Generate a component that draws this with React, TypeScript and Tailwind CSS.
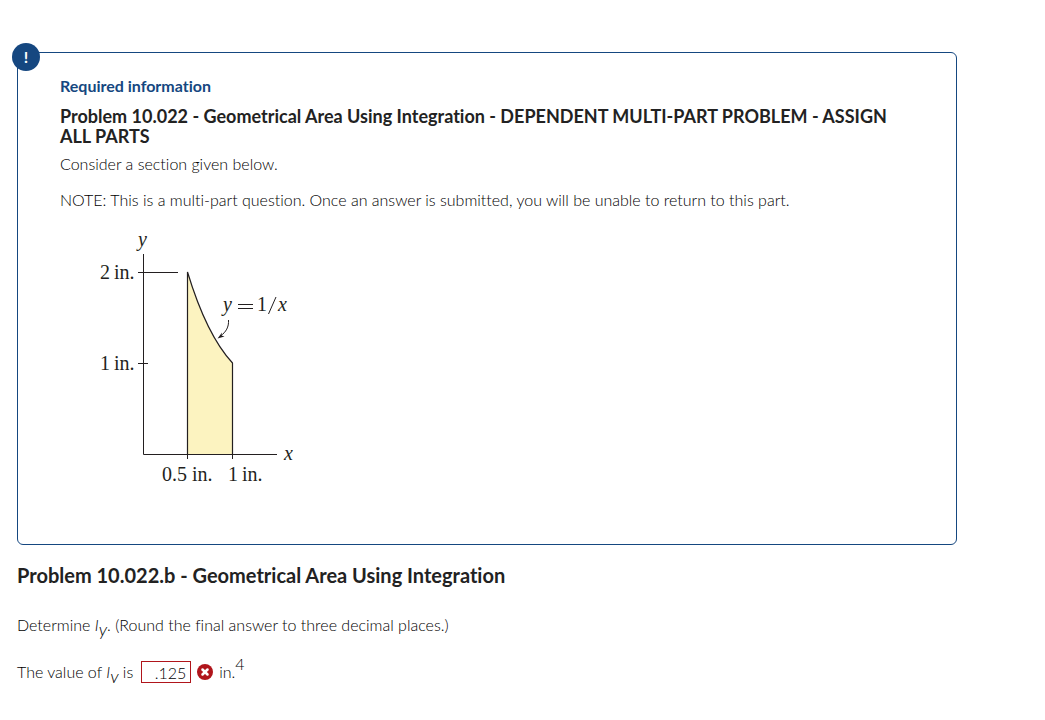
import { X } from "lucide-react";

function SectionFigure() {
  return (
    <svg
      width="220"
      height="264"
      viewBox="80 228 220 264"
      role="img"
      aria-label="Area under y = 1/x between 0.5 in. and 1 in."
      className="font-['Liberation_Serif',serif] text-[20px]"
      fill="#231f20"
    >
      {/* Shaded area */}
      <path
        d="M187.500 272C199 310 214 343 232.500 363V454.500H187.500Z"
        fill="#fcf3c0"
        stroke="#231f20"
        strokeWidth="1.2"
      />

      {/* Axes and ticks */}
      <g stroke="#231f20" strokeWidth="1" fill="none">
        <path d="M143.500 254V454.500H277" />
        <path d="M138 272.500H178" />
        <path d="M138 363.500H148" />
        <path d="M187.500 449V459" />
        <path d="M232.500 449V459" />
        <path d="M228.500 320C229 327 226 332 220.500 336" />
      </g>
      <path d="M217.500 338.500L222 332.500L221.500 335.500L224.500 336.500Z" />

      <text x="138" y="246" fontStyle="italic">y</text>
      <text x="100" y="279">2</text>
      <text x="114" y="279">in.</text>
      <text x="100" y="370">1</text>
      <text x="114" y="370">in.</text>
      <text x="223" y="311" fontStyle="italic">y</text>
      <path d="M238 304.500H253M238 308.500H253" stroke="#231f20" />
      <text x="257" y="311">1</text>
      <path d="M268.500 314L276 297" stroke="#231f20" />
      <text x="278" y="311" fontStyle="italic">x</text>
      <text x="284" y="460" fontStyle="italic">x</text>
      <text x="162" y="481">0.5</text>
      <text x="192" y="481">in.</text>
      <text x="228" y="481">1</text>
      <text x="242" y="481">in.</text>
    </svg>
  );
}

function MomentSymbol() {
  return (
    <i>
      I<sub className="text-lg leading-none">y</sub>
    </i>
  );
}

export default function App() {
  return (
    <main className="pt-[52px] pl-[17px] pr-[88px] font-['Lato',sans-serif] text-base leading-5 font-light text-black [font-variant-ligatures:none]">
      {/* Required information */}
      <section className="relative rounded-md border border-[#154780] px-[42px] pt-[23px] pb-[52px]">
        <span className="absolute -left-1.5 -top-2.5 flex size-7 items-center justify-center rounded-full bg-[#154780] text-base font-bold text-white">
          !
        </span>
        <h2 className="font-bold text-[#154780]">Required information</h2>
        <h3 className="mt-[10px] text-lg leading-5 font-bold text-[#222222]">
          Problem 10.022 - Geometrical Area Using Integration - DEPENDENT MULTI-PART PROBLEM - ASSIGN ALL PARTS
        </h3>
        <p className="mt-2">Consider a section given below.</p>
        <p className="mt-4">
          NOTE: This is a multi-part question. Once an answer is submitted, you will be unable to return to this part.
        </p>
        <div className="mt-[18px] ml-5">
          <SectionFigure />
        </div>
      </section>

      {/* Question */}
      <h1 className="mt-[18px] text-xl leading-6 font-bold text-[#222222]">
        Problem 10.022.b - Geometrical Area Using Integration
      </h1>
      <p className="mt-7">
        Determine <MomentSymbol />. (Round the final answer to three decimal places.)
      </p>
      <div className="mt-[26px] flex items-center">
        <label htmlFor="moment">
          The value of <MomentSymbol /> is
        </label>
        <input
          id="moment"
          defaultValue=".125"
          className="ml-2 h-[22px] w-[50px] border border-[#b0151b] pr-1 text-right"
        />
        <span className="mx-1.5 flex size-4 items-center justify-center rounded-full bg-[#b0151b]">
          <X className="size-2.5 text-white" strokeWidth={6} aria-label="Incorrect" />
        </span>
        <span>
          in.<sup className="text-base leading-none">4</sup>
        </span>
      </div>
    </main>
  );
}
